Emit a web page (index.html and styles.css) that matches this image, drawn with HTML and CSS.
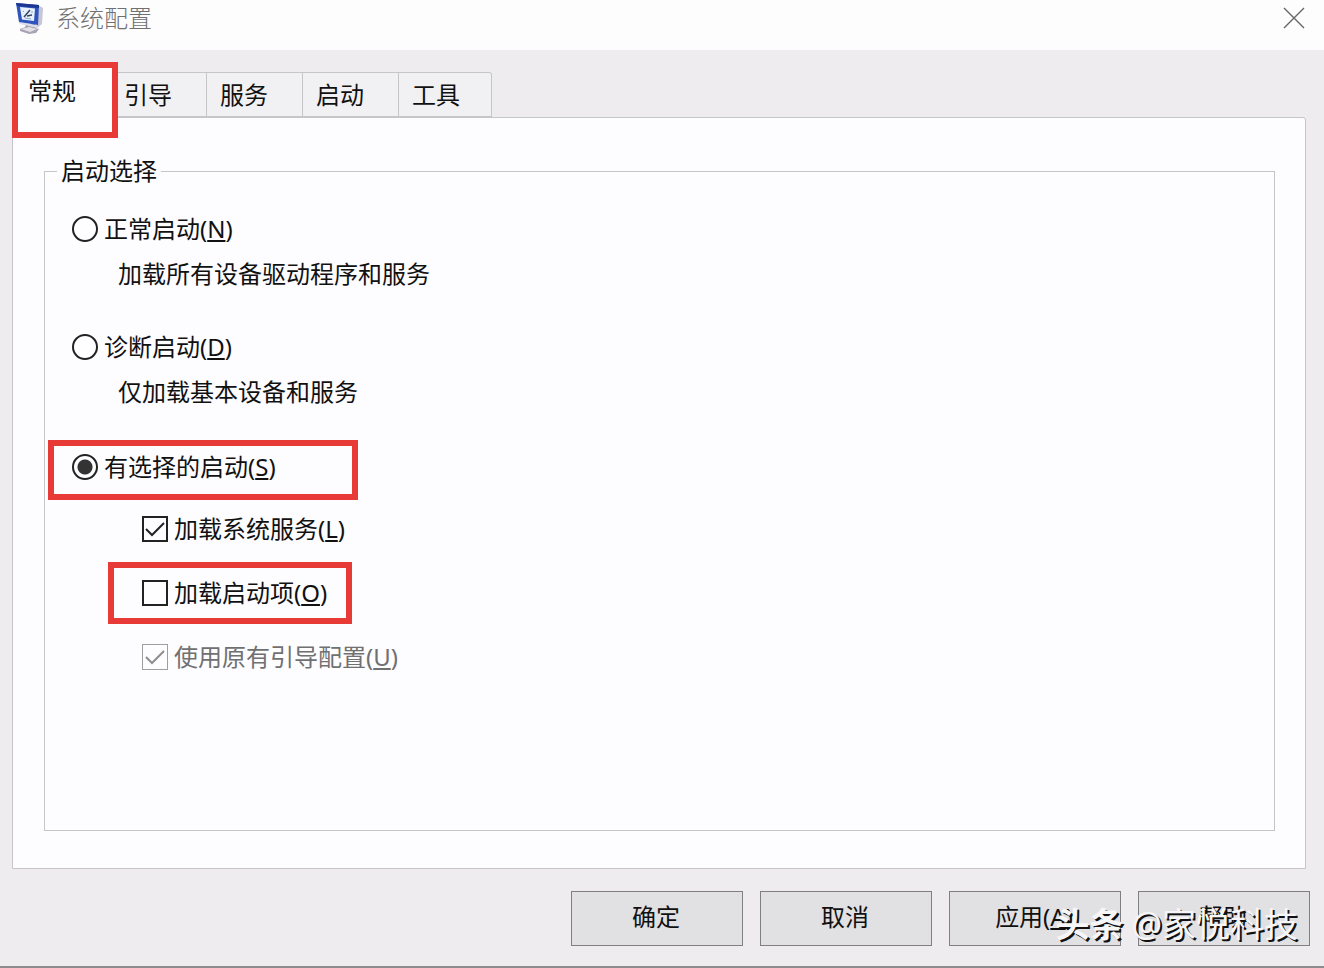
FILE: index.html
```html
<!DOCTYPE html>
<html lang="zh-CN">
<head>
<meta charset="utf-8">
<title>系统配置</title>
<link rel="stylesheet" href="styles.css">
</head>
<body>
<main class="window">
  <header class="titlebar">
    <svg class="app-icon" width="28" height="32" viewBox="0 0 28 32" aria-hidden="true">
      <path d="M10 22h9l1 5H9z" fill="#8f8a9c"/>
      <path d="M4 27l8-3 11 3-3 4-7 1-9-3z" fill="#a9a4b2"/>
      <path d="M5 27l8-2 8 2-7 3z" fill="#e4e0e8"/>
      <path d="M22 3l5 3-1 16-5 4z" fill="#c6c6d8"/>
      <path d="M2 20l19 3v3L4 22z" fill="#dcdcea"/>
      <path d="M0 1l23 2-1 20-19-3z" fill="#2f55bd"/>
      <path d="M0 1l23 2v3L1 4z" fill="#1b3690"/>
      <path d="M4 5l15 1.500-1 12.500-12-1.500z" fill="#e6f1fd"/>
      <path d="M8 15l6-7M11 14l5-1" stroke="#34425f" stroke-width="1.500" fill="none"/>
      <path d="M7 10l1-1M16 9v2M9 16l6 1" stroke="#8ba0c6" fill="none"/>
    </svg>
    <h1 class="title">系统配置</h1>
    <button class="close" type="button" aria-label="关闭">
      <svg width="22" height="22" viewBox="0 0 22 22" aria-hidden="true"><path d="M1 1l20 20M21 1L1 21" stroke="#666" stroke-width="1.400"/></svg>
    </button>
  </header>

  <nav class="tabs" role="tablist">
    <button class="tab tab-active" type="button" role="tab" aria-selected="true">常规</button>
    <button class="tab" type="button" role="tab">引导</button>
    <button class="tab" type="button" role="tab">服务</button>
    <button class="tab" type="button" role="tab">启动</button>
    <button class="tab" type="button" role="tab">工具</button>
  </nav>

  <section class="panel">
    <fieldset class="group">
      <legend class="legend">启动选择</legend>
      <div class="options">
        <label class="option"><input class="radio" type="radio" name="startup"><span>正常启动(<u>N</u>)</span></label>
        <p class="description">加载所有设备驱动程序和服务</p>
        <label class="option option-next"><input class="radio" type="radio" name="startup"><span>诊断启动(<u>D</u>)</span></label>
        <p class="description">仅加载基本设备和服务</p>
        <div class="marked marked-radio">
          <label class="option"><input class="radio" type="radio" name="startup" checked><span>有选择的启动(<u>S</u>)</span></label>
        </div>
        <label class="option option-sub"><input class="check" type="checkbox" checked><span>加载系统服务(<u>L</u>)</span></label>
        <div class="marked marked-check">
          <label class="option"><input class="check" type="checkbox"><span>加载启动项(<u>O</u>)</span></label>
        </div>
        <label class="option option-sub option-disabled"><input class="check" type="checkbox" checked disabled><span>使用原有引导配置(<u>U</u>)</span></label>
      </div>
    </fieldset>
  </section>

  <footer class="actions">
    <button class="action" type="button">确定</button>
    <button class="action" type="button">取消</button>
    <button class="action" type="button">应用(<u>A</u>)</button>
    <button class="action" type="button">帮助</button>
    <div class="watermark"><b>头条</b><span>@家悦科技</span></div>
  </footer>
</main>
</body>
</html>
```

FILE: styles.css
```css
* {
  box-sizing: border-box;
}

body {
  margin: 0;
  background: #eeecef;
  color: #111;
  font: 24px/32px "Noto Sans", "Noto Sans CJK SC", sans-serif;
}

button {
  font: inherit;
  color: inherit;
}

u {
  text-decoration-thickness: 2px;
  text-underline-offset: 2px;
}

.window {
  display: flex;
  flex-direction: column;
  min-height: 100vh;
  border-bottom: 2px solid #8c8b8e;
}

.titlebar {
  display: flex;
  align-items: flex-start;
  height: 50px;
  padding: 2px 19px 0 16px;
  background: #fefdfe;
}

.title {
  flex: 1;
  margin: 0 0 0 12px;
  color: #707070;
  font-size: 24px;
  font-weight: 300;
  line-height: 32px;
}

.close {
  display: flex;
  margin-top: 5px;
  padding: 0;
  border: 0;
  background: none;
}

.tabs {
  display: flex;
  align-items: flex-start;
  height: 67px;
  padding: 12px 12px 0;
}

.tab {
  width: 96px;
  height: 45px;
  margin-top: 10px;
  padding: 0 0 0 13px;
  border: 1px solid #c6c5c9;
  border-left: 0;
  background: #f1f0f3;
  text-align: left;
}

.tab:nth-child(2) {
  width: 89px;
  padding-left: 6px;
}

.tab:last-child {
  width: 93px;
  border-top-right-radius: 3px;
}

.tab-active {
  position: relative;
  z-index: 1;
  width: 106px;
  height: 76px;
  margin-top: 0;
  padding: 0 0 18px 10px;
  border: 6px solid #e83a36;
  background: #fefdff;
}

.panel {
  display: flex;
  flex: 1;
  margin: 0 18px 0 12px;
  padding: 37px 30px 37px 31px;
  border: 1px solid #c6c5c9;
  border-radius: 0 3px 0 0;
  background: #fdfcff;
}

.group {
  flex: 1;
  min-width: 0;
  margin: 0;
  padding: 0 3px 24px;
  border: 1px solid #c4c5ca;
}

.legend {
  margin-left: 9px;
  padding: 0 4px;
}

.options {
  display: flex;
  flex-direction: column;
  align-items: flex-start;
  padding-top: 26px;
}

.option {
  display: flex;
  align-items: center;
  gap: 6px;
  margin-left: 24px;
}

.option-next {
  margin-top: 41px;
}

.option-sub {
  margin-top: 13px;
  margin-left: 94px;
}

.option-disabled {
  margin-top: 17px;
  color: #707070;
}

.description {
  margin: 13px 0 0 70px;
}

.marked {
  border: 6px solid #e83a36;
}

.marked .option {
  margin-left: 0;
}

.marked-radio {
  width: 310px;
  margin-top: 32px;
  padding: 5px 0 11px 18px;
}

.marked-check {
  width: 244px;
  margin: 17px 0 0 60px;
  padding: 9px 0 9px 28px;
}

.radio,
.check {
  appearance: none;
  flex: none;
  width: 26px;
  height: 26px;
  margin: 0;
  border: 2px solid #222;
  background: #fefdff;
}

.radio {
  border-radius: 50%;
}

.radio:checked {
  background: radial-gradient(circle, #333 0 7px, #fefdff 8px);
}

.check:checked {
  background: url("data:image/svg+xml,%3Csvg xmlns='http://www.w3.org/2000/svg' viewBox='0 0 22 22'%3E%3Cpath d='M2 11l6 6L20 5' fill='none' stroke='%23222' stroke-width='2'/%3E%3C/svg%3E") center / 22px no-repeat;
}

.check:disabled {
  border: 1px solid #444;
  opacity: 0.5;
}

.actions {
  position: relative;
  display: flex;
  justify-content: flex-end;
  gap: 17px;
  padding: 22px 14px 20px;
}

.action {
  width: 172px;
  height: 55px;
  padding: 0 2px 4px 0;
  border: 1px solid #808083;
  background: #e1e0e2;
}

.watermark {
  position: absolute;
  right: 26px;
  bottom: 20px;
  display: flex;
  gap: 8px;
  color: #f6f5f7;
  font-size: 34px;
  line-height: 44px;
  text-shadow: 2px 2px 0 #111;
  pointer-events: none;
}
```
